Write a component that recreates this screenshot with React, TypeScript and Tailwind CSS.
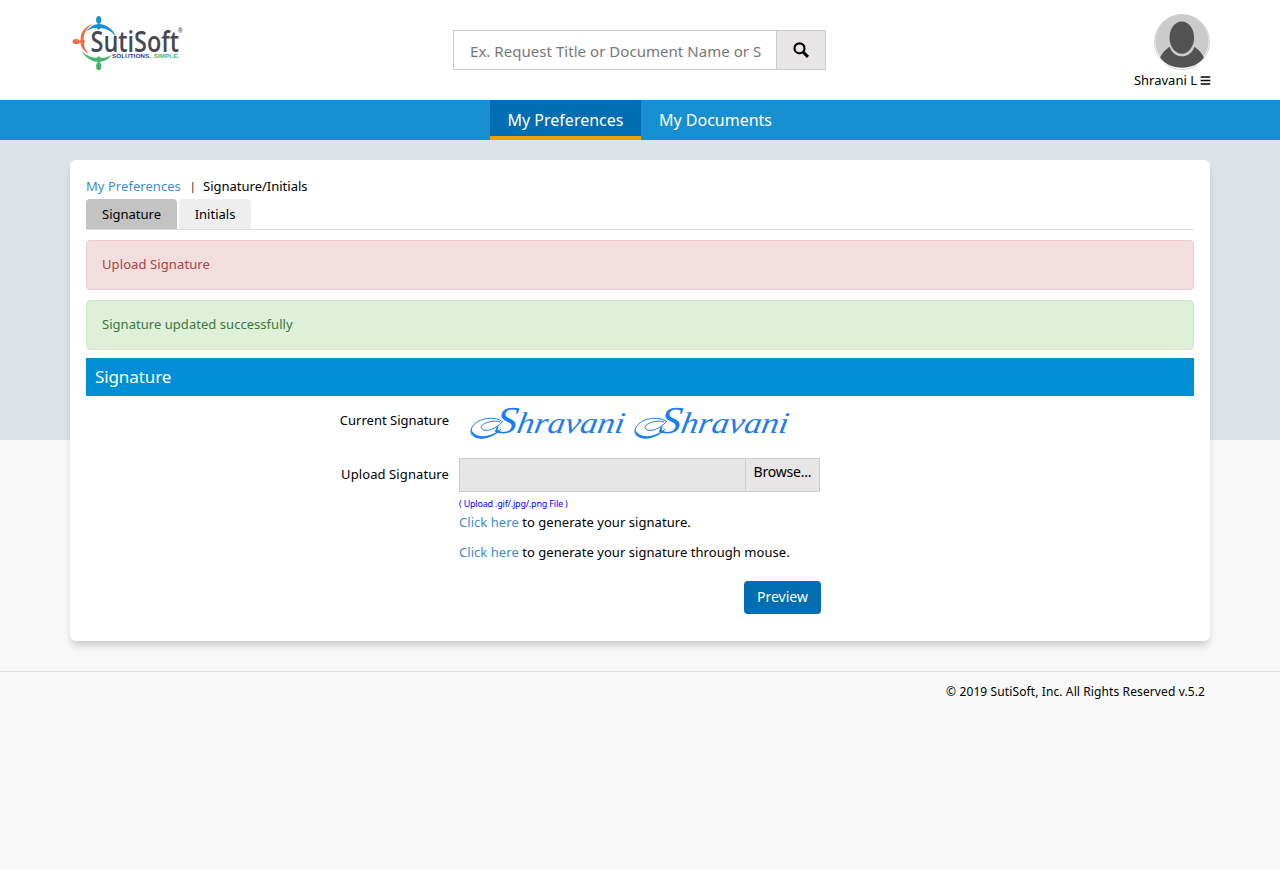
import { FaBars } from "react-icons/fa";

function Logo() {
  return (
    <svg width="114" height="60" viewBox="0 0 114 60" className="block overflow-visible">
      <g fill="#1590d2">
        <ellipse cx="26.7" cy="6.8" rx="2.6" ry="3.9" />
        <path d="M14 19C18 13.5 22 11.5 25 11.3L26.7 10.3L28.5 11.3C34 11.7 41 16 44.3 23.8C39 17.5 33 14.8 28.5 15.2L26.7 17L25 15.2C21 14.6 17.5 16 14 19Z" />
      </g>
      <g fill="#f26c45">
        <ellipse cx="4.2" cy="28.5" rx="3.6" ry="2.6" />
        <path d="M20.5 10.8C11 14.5 8.5 21 8.6 26.8L7.3 28.5L8.6 30.3C8.9 34 11.5 38.5 16.5 40.6C13 36.5 11.8 33.5 12 30.2L13.3 28.5L11.7 26.8C11.4 21 14 15.8 20.5 10.8Z" />
      </g>
      <g fill="#46b66d">
        <ellipse cx="26.7" cy="53.2" rx="2.6" ry="3.9" />
        <path d="M9.5 37.5C13 44.5 19 48.3 25 48.8L26.7 49.8L28.5 48.8C33 48.3 37 46 39.2 42C35.5 44.2 32 45.2 28.5 44.8L26.7 43L25 44.8C19 44.9 14 42.5 9.5 37.5Z" />
      </g>
      <text x="18.5" y="38.7" textLength="88.5" lengthAdjust="spacingAndGlyphs" fontFamily="Open Sans, sans-serif" fontWeight="600" fontSize="29" fill="#444955">SutiSoft</text>
      <text x="106" y="20.3" fontFamily="Liberation Sans, sans-serif" fontSize="6.5" fontWeight="700" fill="#555">®</text>
      <text x="40" y="45.3" textLength="39" lengthAdjust="spacingAndGlyphs" fontFamily="Liberation Sans, sans-serif" fontWeight="700" fontSize="5.6" fill="#2e3fa0">SOLUTIONS.</text>
      <text x="81.7" y="45.3" textLength="25.5" lengthAdjust="spacingAndGlyphs" fontFamily="Liberation Sans, sans-serif" fontWeight="700" fontSize="5.6" fill="#4dba70">SIMPLE.</text>
    </svg>
  );
}

function Avatar() {
  return (
    <svg width="56" height="56" viewBox="0 0 56 56" className="block">
      <circle cx="28" cy="28" r="27.5" fill="#fff" stroke="#d2d2d2" />
      <circle cx="28" cy="27.2" r="26.7" fill="#cbcbcb" />
      <path d="M5.5 44C12 57 44 57 50.5 44L51 41C47 56 9 56 5 41Z" fill="#fff" />
      <path d="M6 43.5C8.5 38.5 11.5 35.5 15.5 32.7C20 45.5 36 45.5 40.5 32.7C44.5 35.5 47.5 38.5 50 43.5C45 50.5 37 53.7 28 53.7S11 50.5 6 43.5Z" fill="#525252" />
      <ellipse cx="27.8" cy="23.6" rx="12.3" ry="16.2" fill="#525252" />
    </svg>
  );
}

function SearchIcon() {
  return (
    <svg width="16" height="16" viewBox="0 0 16 16" fill="none" stroke="#000">
      <circle cx="6.5" cy="6.3" r="5" strokeWidth="2.2" />
      <path d="M10 10L15 14.8" strokeWidth="3" />
    </svg>
  );
}

function SignatureDrawing() {
  const offsets = [0, 164];
  return (
    <svg width="330" height="42" viewBox="0 0 330 42" className="block overflow-visible">
      {offsets.map((x) => (
        <g key={x} transform={`translate(${x} 0)`}>
          <path d="M34 20C26 13 5 16 2 28C0 38 20 40 32 27M31 20C22 17 9 23 13 27C17 31 28 26 33 20" fill="none" stroke="#1c7df0" strokeWidth="1" />
          <path d="M2 27C1 39 21 40 32 27C21 36 6 37 2 27Z" fill="#1c7df0" />
          <g transform="translate(0 31) skewX(-10)" fill="#1c7df0" fontFamily="Liberation Serif, serif" fontStyle="italic">
            <text x="25" y="0" textLength="129" lengthAdjust="spacingAndGlyphs" fontSize="30"><tspan fontSize="38">S</tspan>hravani</text>
          </g>
        </g>
      ))}
    </svg>
  );
}

export default function App() {
  return (
    <div className="flex min-h-[869px] flex-col bg-[#f8f8f8] font-['Noto_Sans',sans-serif] text-[13px] leading-5 text-black">
      <header className="h-[100px] bg-white">
        <div className="mx-auto flex w-[1140px] justify-between">
          <div className="w-[383px] pt-[13px] pl-[2px]"><Logo /></div>
          <div className="mt-[30px] flex h-10 w-[373px] border border-[#ccc]">
            <input
              className="w-[322px] pt-[2px] pr-[15px] pl-4 text-[15px] tracking-[0.04px] text-black outline-none placeholder:text-[#777]"
              placeholder="Ex. Request Title or Document Name or Subject"
            />
            <button className="flex flex-1 items-center justify-center border-l border-[#ccc] bg-[#e7e5e6]"><SearchIcon /></button>
          </div>
          <div className="flex w-[384px] flex-col items-end pt-[14px]">
            <Avatar />
            <div className="flex items-center gap-[3px] whitespace-nowrap"><span>Shravani L</span><FaBars size={11} className="-mr-px" /></div>
          </div>
        </div>
      </header>
      <nav className="flex h-10 bg-[#178fd0] pl-[490px] text-[16px] leading-10 text-white">
        <a className="w-[151px] border-b-4 border-[#f0a000] bg-[#006eb0] text-center">My Preferences</a>
        <a className="w-[149px] text-center">My Documents</a>
      </nav>
      <main className="h-[531px] bg-[linear-gradient(#dce4ea_300px,#f8f8f8_300px)] pt-5">
        <section className="mx-auto h-[481px] w-[1140px] rounded-md bg-white px-4 pt-4 shadow-[0_6px_8px_-2px_rgba(0,0,0,0.2)]">
          <div className="flex h-[23px] whitespace-nowrap">
            <a className="w-[104px] tracking-[0.05px] text-[#428bca]">My Preferences</a>
            <span className="w-[13px] text-[10px]">|</span>
            <span>Signature/Initials</span>
          </div>
          <div className="flex h-[31px] gap-[2px] border-b border-[#ddd] leading-[30px]">
            <div className="w-[91px] rounded-t bg-[#c3c3c3] text-center">Signature</div>
            <div className="w-[72px] rounded-t bg-[#eee] text-center">Initials</div>
          </div>
          <div className="mt-[10px] h-[50px] rounded border border-[#ebccd1] bg-[#f2dede] px-[15px] leading-[46px] tracking-[0.1px] text-[#a94442]">Upload Signature</div>
          <div className="mt-[10px] h-[50px] rounded border border-[#d6e9c6] bg-[#dff0d8] px-[15px] leading-[46px] tracking-[0.04px] text-[#3c763d]">Signature updated successfully</div>
          <h2 className="mt-2 h-[38px] bg-[#008fd7] pl-[9px] text-[17px] leading-[38px] tracking-[-0.1px] text-white">Signature</h2>
          <div className="flex h-[62px]">
            <div className="w-[363px] pt-[14px] text-right">Current Signature</div>
            <div className="pt-[6px] pl-[20px]"><SignatureDrawing /></div>
          </div>
          <div className="flex">
            <div className="w-[363px] pt-[6px] text-right tracking-[0.1px]">Upload Signature</div>
            <div className="ml-[10px] w-[362px]">
              <div className="flex h-[34px] w-[361px] border border-[#ccc] bg-[#e6e6e6]">
                <div className="w-[285px]" />
                <div className="flex-1 border-l border-[#ccc] bg-[#e7e5e6] text-center text-[14px] leading-[26px] tracking-[-0.2px]">Browse...</div>
              </div>
              <div className="mt-[6px] h-[14px] text-[9px] leading-3 tracking-[-0.2px] text-[#0000ff]">( Upload .gif/.jpg/.png File )</div>
              <div className="h-[30px] tracking-[0.05px] whitespace-nowrap"><a className="text-[#428bca]">Click here</a> to generate your signature.</div>
              <div className="h-[39px] tracking-[0.05px] whitespace-nowrap"><a className="text-[#428bca]">Click here</a> to generate your signature through mouse.</div>
              <button className="ml-[285px] block h-[33px] w-[77px] rounded bg-[#006eb0] pb-[2px] text-[14px] text-white">Preview</button>
            </div>
          </div>
        </section>
      </main>
      <footer className="border-t border-[#e0e0e0] pt-[10px]">
        <div className="mx-auto w-[1140px] pr-[5px] text-right text-[12px] tracking-[0.11px]">© 2019 SutiSoft, Inc. All Rights Reserved v.5.2</div>
      </footer>
    </div>
  );
}
